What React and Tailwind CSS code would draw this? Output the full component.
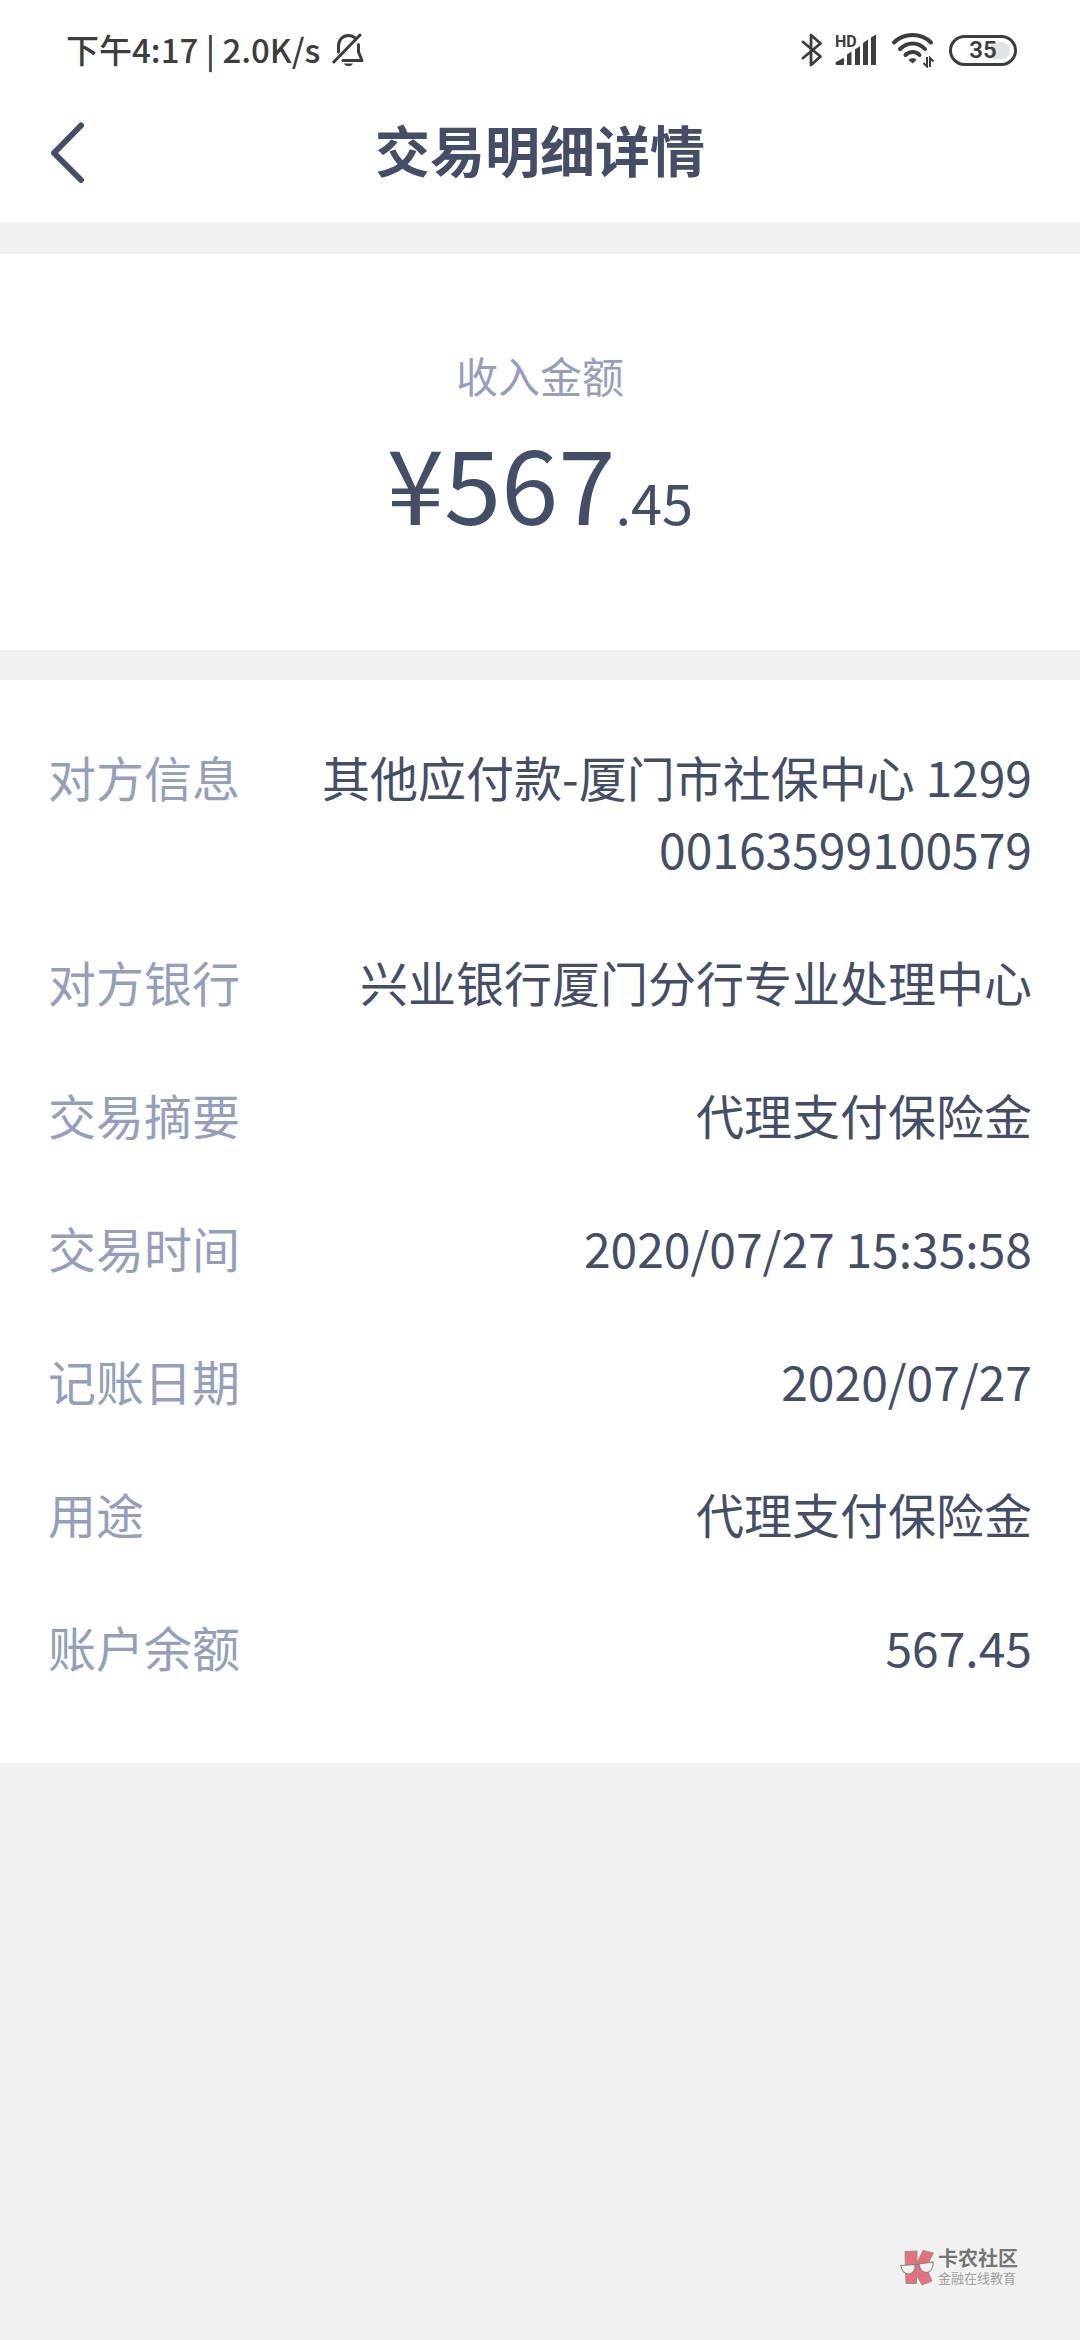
import React from 'react';

const details = [
  { label: '对方信息', value: '其他应付款-厦门市社保中心 129900163599100579' },
  { label: '对方银行', value: '兴业银行厦门分行专业处理中心' },
  { label: '交易摘要', value: '代理支付保险金' },
  { label: '交易时间', value: '2020/07/27 15:35:58' },
  { label: '记账日期', value: '2020/07/27' },
  { label: '用途', value: '代理支付保险金' },
  { label: '账户余额', value: '567.45' },
];

const BellOffIcon = () => (
  <svg width="32" height="34" viewBox="0 0 32 34" fill="none" stroke="currentColor" strokeWidth="3" strokeLinecap="round" strokeLinejoin="round">
    <path d="M6.5 19V13C6.5 7 10.5 2.5 16.5 2.5C19 2.5 21 3.2 22.5 4.5" />
    <path d="M26.5 11.500V19L30 27.500H11" />
    <path d="M28 2L1.800 29" />
    <path d="M12 30.500H21C20 32.500 18.500 33 16.500 33S13 32.500 12 30.500Z" fill="currentColor" stroke="none" />
  </svg>
);

const BluetoothIcon = () => (
  <svg width="22" height="34" viewBox="0 0 22 34" fill="none" stroke="currentColor" strokeWidth="2.800" strokeLinecap="round" strokeLinejoin="round">
    <path d="M2 9L19.500 23.500L10 32V2L19.500 10.500L2 25" />
  </svg>
);

const SignalIcon = () => (
  <svg width="42" height="32" viewBox="0 0 42 32" fill="currentColor">
    <path d="M1 30.500V28.500L8.500 24.500V30.500H2Z" stroke="currentColor" strokeLinejoin="round" />
    <path d="M12 20.500L16.500 17.500V31H12Z" />
    <path d="M20 15.500L25 12V31H20Z" />
    <path d="M28 9L33 5.500V31H28Z" />
    <path d="M36 3.500L41 0.500V31H36Z" />
  </svg>
);

const WifiIcon = () => (
  <svg width="44" height="36" viewBox="0 0 44 36" fill="none" stroke="currentColor" strokeWidth="4" strokeLinecap="round">
    <path d="M3 10.500C13 0.500 30 0.500 40 10.500" />
    <path d="M9 17C16.500 9.500 27 9.500 34 17" />
    <path d="M14.500 23C18.500 19 25 19 28.500 23" />
    <path d="M17.500 28C19.500 25.500 24 25.500 25.500 28L21.500 31.500Z" fill="currentColor" stroke="none" />
    <path d="M36 25V34.500L32.500 31M39 35V26L42.500 29.500" strokeWidth="2" strokeLinecap="butt" />
  </svg>
);

const CommunityLogo = () => (
  <svg width="34" height="36" viewBox="0 0 34 36" fill="none">
    <path d="M5 1.500L17 1V13L23 0.500L33.500 3L26 17L32 31L22 35L16.500 25V33.500H6Z" fill="#e5717a" stroke="#a08c8e" strokeWidth="1" />
    <path d="M1 15.500L15 14.500C16 19.500 13.500 23.500 9 24C4.500 24 1.500 20.500 1 15.500Z" fill="#f1f1f1" stroke="#858585" strokeWidth="1.200" />
    <path d="M19 14L33 12C33.500 17 31.500 21.500 27 22.500C22.500 22.500 19.500 19 19 14Z" fill="#f1f1f1" stroke="#858585" strokeWidth="1.200" />
    <path d="M15 15L19 14" stroke="#858585" strokeWidth="1.200" />
  </svg>
);

const StatusBar = () => (
  <div className="flex h-[100px] items-center justify-between pl-[66px] pr-[63px] text-[#3d3d3d]">
    <div className="flex items-center gap-3 text-[33px] font-medium">
      <span>下午4:17 | 2.0K/s</span>
      <BellOffIcon />
    </div>
    <div className="flex items-center">
      <BluetoothIcon />
      <div className="relative ml-3">
        <span className="absolute left-0 top-0 font-['Roboto'] text-base leading-none font-bold">HD</span>
        <SignalIcon />
      </div>
      <div className="ml-[14px]">
        <WifiIcon />
      </div>
      <div className="relative ml-[14px] flex h-[31px] w-[68px] items-center justify-center rounded-full border-3 border-current">
        <div className="absolute inset-y-1 right-1 w-[19px] rounded-r-full bg-[#e2e2e2]" />
        <span className="relative font-['Roboto'] text-2xl leading-none font-semibold">35</span>
      </div>
    </div>
  </div>
);

const TransactionDetail = () => {
  return (
    <div className="flex min-h-screen flex-col bg-[#f1f1f1] font-['Noto_Sans_CJK_SC',sans-serif] text-[#444e66]">
      {/* Header */}
      <header className="bg-white pb-[18px]">
        <StatusBar />
        <div className="grid h-[104px] grid-cols-[1fr_auto_1fr] items-center px-12">
          <button type="button" aria-label="返回" className="justify-self-start">
            <svg width="38" height="62" viewBox="0 0 38 62" fill="none" stroke="currentColor" strokeWidth="6" strokeLinecap="round" strokeLinejoin="round">
              <path d="M33 4.500L6 32L33 59" />
            </svg>
          </button>
          <h1 className="pb-2 text-[55px] leading-none font-bold">交易明细详情</h1>
        </div>
      </header>

      {/* Amount */}
      <section className="mt-8 bg-white pt-[91px] pb-[73px] text-center">
        <p className="text-[42px] leading-[60px] text-[#959fbc]">收入金额</p>
        <p className="text-[103px] leading-[152px]">
          ¥567<span className="text-[56px]">.45</span>
        </p>
      </section>

      {/* Details */}
      <dl className="mt-[30px] flex flex-col gap-[61px] bg-white px-12 pt-[60px] pb-[81px] text-5xl leading-[72px]">
        {details.map((item) => (
          <div key={item.label} className="flex justify-between gap-[60px]">
            <dt className="shrink-0 text-[#959fbc]">{item.label}</dt>
            <dd className="text-right break-all">{item.value}</dd>
          </div>
        ))}
      </dl>

      {/* Community mark */}
      <footer className="mt-auto flex items-center justify-end gap-1 pr-[62px] pb-[52px]">
        <CommunityLogo />
        <div className="text-[#757575]">
          <p className="text-xl leading-5 font-bold">卡农社区</p>
          <p className="text-[13px] leading-5 text-[#a0a0a0]">金融在线教育</p>
        </div>
      </footer>
    </div>
  );
};

export default TransactionDetail;
